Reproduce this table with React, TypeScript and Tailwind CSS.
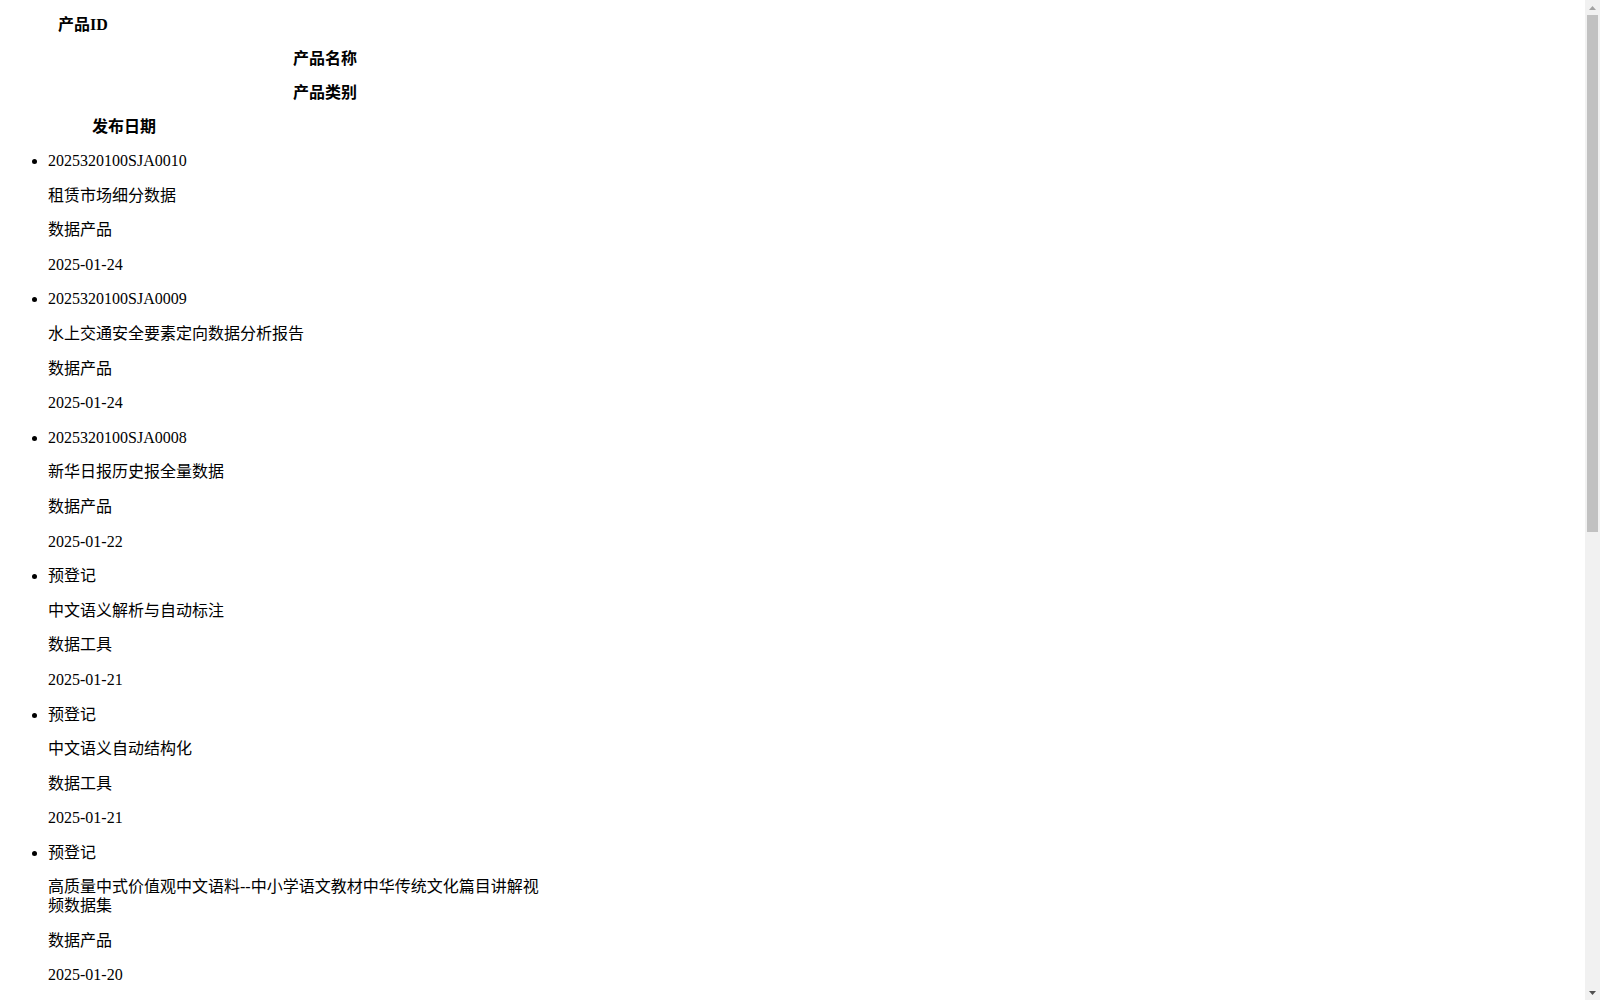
import React from "react";

type Item = { id: string; name: string; type: string; date: string };

const items: Item[] = [
  { id: "2025320100SJA0010", name: "租赁市场细分数据", type: "数据产品", date: "2025-01-24" },
  { id: "2025320100SJA0009", name: "水上交通安全要素定向数据分析报告", type: "数据产品", date: "2025-01-24" },
  { id: "2025320100SJA0008", name: "新华日报历史报全量数据", type: "数据产品", date: "2025-01-22" },
  { id: "预登记", name: "中文语义解析与自动标注", type: "数据工具", date: "2025-01-21" },
  { id: "预登记", name: "中文语义自动结构化", type: "数据工具", date: "2025-01-21" },
  { id: "预登记", name: "高质量中式价值观中文语料--中小学语文教材中华传统文化篇目讲解视频数据集", type: "数据产品", date: "2025-01-20" },
  { id: "2025320100SJA0007", name: "南京市公共交通出行客流数据", type: "数据产品", date: "2025-01-17" },
  { id: "预登记", name: "长三角区域企业经营画像数据集", type: "数据产品", date: "2025-01-16" },
  { id: "2025320100SJA0006", name: "城市商圈人流热力分析数据", type: "数据产品", date: "2025-01-15" },
  { id: "预登记", name: "医疗健康知识图谱构建与问答语料--常见疾病诊疗指南结构化文本数据集", type: "数据产品", date: "2025-01-14" },
  { id: "2025320100SJA0005", name: "气象环境监测数据服务", type: "数据服务", date: "2025-01-13" },
  { id: "预登记", name: "多源数据融合清洗工具", type: "数据工具", date: "2025-01-10" },
];

function FakeScrollbar() {
  return (
    <div className="fixed right-0 top-0 z-10 flex h-screen w-[15px] flex-col bg-[#f1f1f1]">
      <div className="flex h-[15px] items-center justify-center">
        <svg width="7" height="4" viewBox="0 0 7 4">
          <polygon points="0,4 7,4 3.5,0" fill="#a3a3a3" />
        </svg>
      </div>
      <div className="mx-[2px] h-[517px] bg-[#c1c1c1]" />
      <div className="flex-1" />
      <div className="flex h-[15px] items-center justify-center">
        <svg width="7" height="4" viewBox="0 0 7 4">
          <polygon points="0,0 7,0 3.5,4" fill="#505050" />
        </svg>
      </div>
    </div>
  );
}

export default function App() {
  return (
    <div className="min-h-screen bg-white px-2 py-4 text-[16px] text-black font-['Liberation_Serif','Noto_Sans_CJK_SC',serif]">
      <FakeScrollbar />
      <div className="space-y-4 font-bold leading-[18px]">
        <div className="w-[150px] text-center">产品ID</div>
        <div className="w-[634px] text-center">产品名称</div>
        <div className="w-[634px] text-center">产品类别</div>
        <div className="w-[232px] text-center">发布日期</div>
      </div>
      <ul className="mt-4 list-disc space-y-4 pl-10 leading-[18.6px]">
        {items.map((it, i) => (
          <li key={i}>
            <div className="space-y-4">
              <p>{it.id}</p>
              <p className="w-[500px]">{it.name}</p>
              <p>{it.type}</p>
              <p>{it.date}</p>
            </div>
          </li>
        ))}
      </ul>
    </div>
  );
}
